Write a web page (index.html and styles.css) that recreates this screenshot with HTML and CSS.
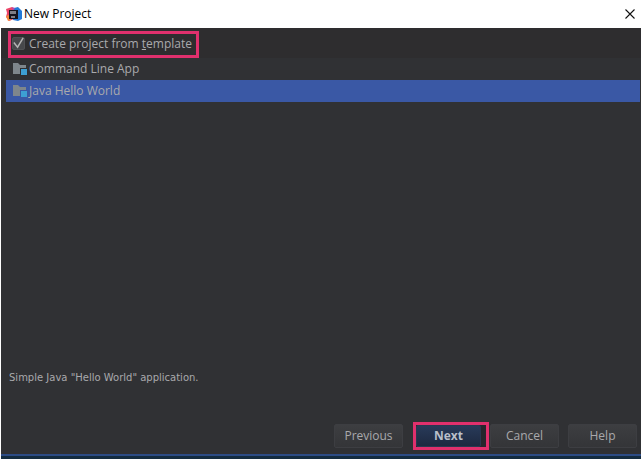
FILE: index.html
```html
<!DOCTYPE html>
<html lang="en">
<head>
<meta charset="utf-8">
<title>New Project</title>
<link rel="stylesheet" href="styles.css">
</head>
<body>
<svg class="sprite" aria-hidden="true">
  <symbol id="folder" viewBox="0 0 16 14">
    <path d="M1 1h5l2 2h6v9H1z" fill="#7e868c"/>
    <rect x="8" y="6" width="8" height="8" class="folder-gap"/>
    <rect x="9" y="7" width="6" height="6" fill="#3d9fd3"/>
  </symbol>
</svg>
<main class="dialog">
  <header class="titlebar">
    <svg class="logo" viewBox="0 0 16 16" aria-hidden="true">
      <path d="M0 3l6-2 4 3-2 9-5 2-3-4 1-4z" fill="#ec4468"/>
      <path d="M0 10l3-1 2 5-3 1z" fill="#f58a3c"/>
      <path d="M8 2l4-1 4 4v8l-4 2-5-1z" fill="#2379d8"/>
      <path d="M6 1l3 1-2 3z" fill="#b34bb0"/>
      <rect x="3" y="4" width="9" height="9" fill="#15121c"/>
      <path d="M5 5v3M7 5v3M9 5v3M5 11h4" fill="none" stroke="#e8e8f0"/>
    </svg>
    <h1 class="title">New Project</h1>
    <button class="close" type="button" aria-label="Close">
      <svg viewBox="0 0 10 10" aria-hidden="true"><path d="M.5 .5l9 9M9.500 .5l-9 9" fill="none" stroke="#111" stroke-width="1.100"/></svg>
    </button>
  </header>
  <section class="content">
    <div class="option">
      <label class="template marked">
        <span class="check">
          <input type="checkbox" checked>
          <svg viewBox="0 0 14 14" aria-hidden="true"><path d="M2 6l4 5 6-10" fill="none" stroke="#b4b4b4" stroke-width="1.600"/></svg>
        </span>
        <span>Create project from <u>t</u>emplate</span>
      </label>
    </div>
    <ul class="templates" role="listbox" aria-label="Templates">
      <li class="row" role="option" aria-selected="false"><svg class="folder" aria-hidden="true"><use href="#folder"/></svg>Command Line App</li>
      <li class="row selected" role="option" aria-selected="true"><svg class="folder" aria-hidden="true"><use href="#folder"/></svg>Java Hello World</li>
    </ul>
    <p class="description">Simple Java "Hello World" application.</p>
    <footer class="actions">
      <button class="btn" type="button">Previous</button>
      <span class="marked next"><button class="btn primary" type="button">Next</button></span>
      <button class="btn" type="button">Cancel</button>
      <button class="btn" type="button">Help</button>
    </footer>
  </section>
</main>
</body>
</html>
```
FILE: styles.css
```css
* {
  box-sizing: border-box;
}

body {
  margin: 0;
  background: #fff;
  color: #a9a9ac;
  font: 12px/16px "Open Sans", "Noto Sans", sans-serif;
}

.sprite {
  position: absolute;
  width: 0;
  height: 0;
}

.dialog {
  display: flex;
  flex-direction: column;
  min-height: 100vh;
  padding-left: 1px;
}

.titlebar {
  display: flex;
  align-items: center;
  height: 28px;
  padding: 0 6px 0 5px;
  color: #000;
}

.logo {
  width: 16px;
  height: 16px;
}

.title {
  flex: 1;
  margin: 0 0 0 2px;
  font-size: 12px;
  font-weight: 400;
}

.close {
  display: flex;
  padding: 0;
  border: 0;
  background: none;
}

.close svg {
  width: 10px;
  height: 10px;
}

.content {
  display: flex;
  flex: 1;
  flex-direction: column;
  background: #303134;
  border-bottom: 3px solid #142c40;
  box-shadow: inset 0 -2px #2d4c85;
}

.option {
  display: flex;
  height: 30px;
  padding: 3px 7px 0;
  background: #2e2d2f;
}

.marked {
  border: 3px solid #e0306d;
}

.template {
  display: flex;
  align-items: center;
  gap: 4px;
  height: 27px;
  padding: 0 4px 2px 1px;
}

.check {
  position: relative;
  display: flex;
}

.check input {
  appearance: none;
  width: 13px;
  height: 13px;
  margin: 0;
  background: #47484b;
  border: 1px solid #505154;
  border-radius: 2px;
}

.check svg {
  position: absolute;
  inset: 0;
  pointer-events: none;
}

.templates {
  flex: 1;
  margin: 0;
  padding: 0 1px 0 5px;
  list-style: none;
}

.row {
  display: flex;
  align-items: center;
  gap: 1px;
  height: 22px;
  padding-left: 6px;
}

.row.selected {
  background: #3a58a5;
}

.folder {
  width: 16px;
  height: 14px;
  fill: #2e2f32;
}

.selected .folder {
  fill: #3a58a5;
}

.description {
  margin: 0 8px 36px;
  font: 10px/16px "DejaVu Sans", sans-serif;
}

.actions {
  display: flex;
  justify-content: flex-end;
  align-items: center;
  padding: 0 4px 6px 0;
}

.btn {
  width: 69px;
  height: 24px;
  margin-left: 9px;
  padding: 0;
  border: 1px solid #3d3e42;
  border-radius: 2px;
  background: linear-gradient(#3d3e41, #343538);
  color: inherit;
  font: inherit;
}

.next {
  display: flex;
  width: 76px;
  height: 28px;
  margin-left: 10px;
  background: #26262c;
}

.next + .btn {
  margin-left: 1px;
}

.primary {
  width: 65px;
  height: 22px;
  margin: 0;
  border-color: #293850;
  background: linear-gradient(#283a59, #1d2940);
  color: #b9bfca;
  font-weight: 700;
}
```
